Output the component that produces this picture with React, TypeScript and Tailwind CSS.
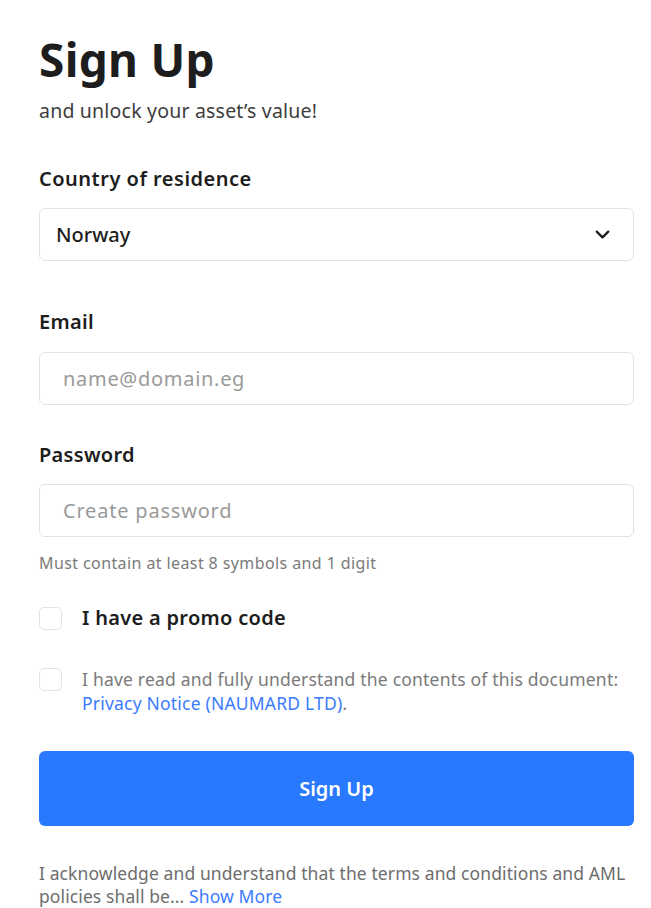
import { ChevronDown } from 'lucide-react';

const font = { fontFamily: '"Noto Sans", "Open Sans", sans-serif' };

function Checkbox() {
  return <span className="mt-[1px] block h-[23px] w-[23px] shrink-0 rounded-[5px] border border-[#e3e3e3] bg-white" />;
}

export default function App() {
  return (
    <div className="min-h-[908px] bg-white pl-[39px] pr-[17px] pt-[30px] text-[#1d1d1d]" style={font}>
      <h1 className="text-[46px] font-bold leading-[58px] tracking-[0.3px]">Sign Up</h1>
      <p className="mt-[11px] text-[19.5px] leading-[24px] tracking-[0.2px] text-[#3d3d3d]">and unlock your asset’s value!</p>

      <form className="mt-[43px]">
        <label className="block text-[20px] font-semibold leading-[26px] tracking-[0.5px]">Country of residence</label>
        <div className="mt-[16px] flex h-[53px] items-center justify-between rounded-[6px] border border-[#e2e2e2] pl-[16px] pr-[19px]">
          <span className="text-[20px] font-medium">Norway</span>
          <ChevronDown className="h-[23px] w-[23px] text-[#1d1d1d]" strokeWidth={2.4} />
        </div>

        <label className="mt-[48px] block text-[20px] font-semibold leading-[26px] tracking-[0.3px]">Email</label>
        <div className="mt-[17px] flex h-[53px] items-center rounded-[6px] border border-[#e2e2e2] px-[23px]">
          <span className="text-[20px] tracking-[0.7px] text-[#9a9a9a]">name@domain.eg</span>
        </div>

        <label className="mt-[37px] block text-[20px] font-semibold leading-[26px] tracking-[0.3px]">Password</label>
        <div className="mt-[16px] flex h-[53px] items-center rounded-[6px] border border-[#e2e2e2] px-[23px]">
          <span className="text-[20px] tracking-[0.8px] text-[#9a9a9a]">Create password</span>
        </div>
        <p className="mt-[15px] text-[16px] leading-[22px] tracking-[0.4px] text-[#7a7a7a]">Must contain at least 8 symbols and 1 digit</p>

        <div className="mt-[31px] flex items-center gap-[20px]">
          <Checkbox />
          <span className="text-[20px] font-semibold leading-[26px] tracking-[0.3px]">I have a promo code</span>
        </div>

        <div className="mt-[36px] flex items-start gap-[20px]">
          <Checkbox />
          <p className="text-[17.5px] leading-[24px] tracking-[0.2px] text-[#7a7a7a]">
            I have read and fully understand the contents of this document:{' '}
            <a className="text-[#3b7bff]">Privacy Notice (NAUMARD LTD)</a>.
          </p>
        </div>

        <button
          type="button"
          className="mt-[36px] flex h-[75px] w-full items-center justify-center rounded-[6px] bg-[#2979ff] text-[20px] font-semibold text-white"
        >
          Sign Up
        </button>

        <p className="mt-[36px] text-[17.5px] leading-[23px] tracking-[0.1px] text-[#6d6d6d]">
          I acknowledge and understand that the terms and conditions and AML policies shall be...{' '}
          <a className="text-[#3b7bff]">Show More</a>
        </p>
      </form>
    </div>
  );
}
